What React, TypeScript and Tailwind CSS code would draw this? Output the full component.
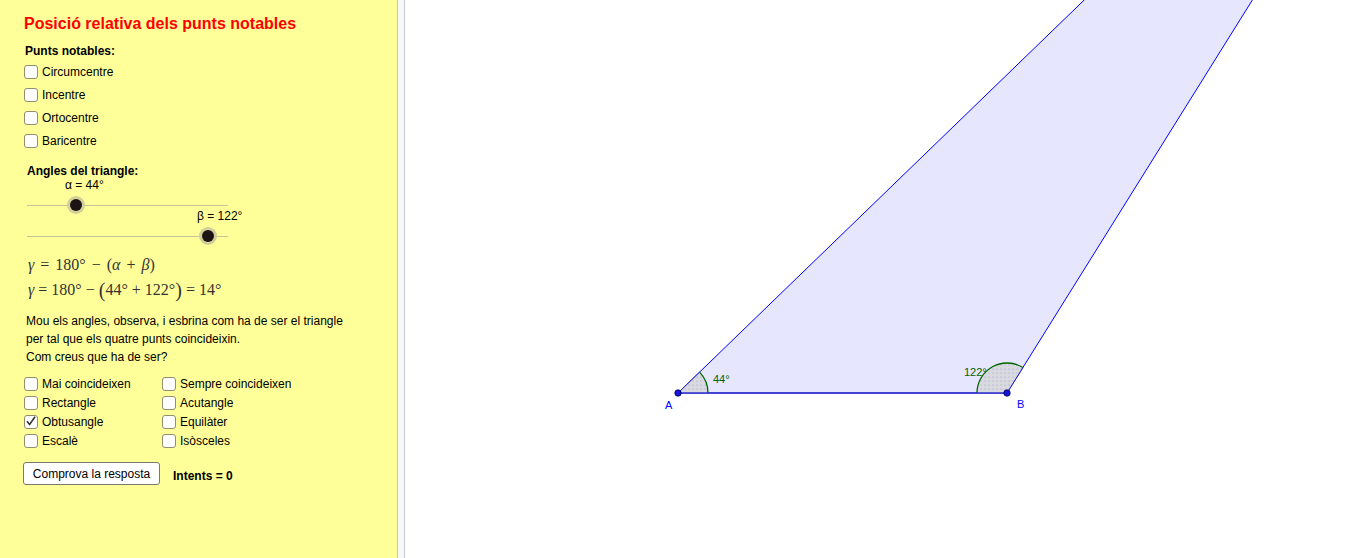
import React from 'react';

// Posició relativa dels punts notables — GeoGebra-style applet

const sans = { fontFamily: '"Liberation Sans", Arial, sans-serif' };
const serif = { fontFamily: '"Liberation Serif", "DejaVu Serif", serif' };

function Box({ checked = false }: { checked?: boolean }) {
  return (
    <span className="relative inline-block w-[14px] h-[14px] shrink-0 rounded-[3px] border-[1.5px] border-[#8f8f70] bg-white">
      {checked && (
        <svg viewBox="0 0 14 14" className="absolute -left-[1.5px] -top-[1.5px] w-[14px] h-[14px]">
          <path d="M3 7.2 L5.6 10.4 L11 2.8" fill="none" stroke="#333" strokeWidth="1.6" />
        </svg>
      )}
    </span>
  );
}

function Option({ label, checked, small }: { label: string; checked?: boolean; small?: boolean }) {
  return (
    <label className={small ? 'flex items-center gap-[4px] h-[19px] text-[12px] text-black' : 'flex items-center gap-[4px] h-[23px] text-[12px] text-black'}>
      <Box checked={checked} />
      <span>{label}</span>
    </label>
  );
}

function Slider({ knob }: { knob: number }) {
  return (
    <div className="relative ml-[3px] w-[201px] h-[12px]">
      <div className="absolute left-0 right-0 top-[6px] h-px bg-[#c4c49a]" />
      <div
        className="absolute top-[-3px] w-[18px] h-[18px] rounded-full bg-[#d0d098] flex items-center justify-center"
        style={{ left: knob - 9 }}
      >
        <div className="w-[12px] h-[12px] rounded-full bg-[#1c1414]" />
      </div>
    </div>
  );
}

function Figure() {
  const A = { x: 678, y: 393 };
  const B = { x: 1007, y: 393 };
  const r = 30;
  const rad = (d: number) => (d * Math.PI) / 180;
  const a1 = { x: A.x + r * Math.cos(rad(44)), y: A.y - r * Math.sin(rad(44)) };
  const b1 = { x: B.x + r * Math.cos(rad(58)), y: B.y - r * Math.sin(rad(58)) };
  return (
    <svg width="961" height="558" viewBox="405 0 961 558" className="block">
      <defs>
        <pattern id="dots" width="4" height="4" patternUnits="userSpaceOnUse">
          <rect width="4" height="4" fill="#d9d9e0" />
          <circle cx="1" cy="1" r="0.6" fill="#a0a0d0" />
        </pattern>
      </defs>
      <polygon
        points={`${A.x},${A.y} ${B.x},${B.y} 1509,-411`}
        fill="#e6e6ff"
        stroke="#0000ff"
        strokeWidth="1"
      />
      {/* angle sectors */}
      <path
        d={`M${A.x},${A.y} L${A.x + r},${A.y} A${r},${r} 0 0 0 ${a1.x},${a1.y} Z`}
        fill="url(#dots)"
      />
      <path d={`M${A.x + r},${A.y} A${r},${r} 0 0 0 ${a1.x},${a1.y}`} fill="none" stroke="#006400" strokeWidth="1.3" />
      <path
        d={`M${B.x},${B.y} L${b1.x},${b1.y} A${r},${r} 0 0 0 ${B.x - r},${B.y} Z`}
        fill="url(#dots)"
      />
      <path d={`M${b1.x},${b1.y} A${r},${r} 0 0 0 ${B.x - r},${B.y}`} fill="none" stroke="#006400" strokeWidth="1.3" />
      <line x1={A.x} y1={A.y} x2={B.x} y2={B.y} stroke="#3030c8" strokeWidth="1.3" />
      <line x1={A.x} y1={A.y} x2={a1.x} y2={a1.y} stroke="#2020c0" strokeWidth="1" />
      <line x1={B.x} y1={B.y} x2={b1.x} y2={b1.y} stroke="#2020c0" strokeWidth="1" />
      <text x="713" y="383" fontSize="11" fill="#006400" style={sans}>44°</text>
      <text x="964" y="376" fontSize="11" fill="#006400" style={sans}>122°</text>
      <circle cx={A.x} cy={A.y} r="3.2" fill="#1515e0" stroke="#000040" strokeWidth="0.8" />
      <circle cx={B.x} cy={B.y} r="3.2" fill="#1515e0" stroke="#000040" strokeWidth="0.8" />
      <text x="665" y="409" fontSize="11" fill="#0000ff" style={sans}>A</text>
      <text x="1017" y="408" fontSize="11" fill="#0000ff" style={sans}>B</text>
    </svg>
  );
}

export default function App() {
  return (
    <div className="flex h-screen w-full overflow-hidden bg-white" style={sans}>
      <div className="w-[397px] shrink-0 bg-[#ffff99] pl-[24px] pt-[14px] flex flex-col">
        <h1 className="text-[16px] leading-[20px] font-bold text-[#ff0000]">
          Posició relativa dels punts notables
        </h1>
        <div className="mt-[9px] ml-[1px] text-[12px] leading-[16px] font-bold text-black">Punts notables:</div>
        <div className="mt-[1px] flex flex-col">
          <Option label="Circumcentre" />
          <Option label="Incentre" />
          <Option label="Ortocentre" />
          <Option label="Baricentre" />
        </div>

        <div className="mt-[12px] ml-[3px] text-[12px] leading-[14px] font-bold text-black">Angles del triangle:</div>
        <div className="ml-[41px] text-[12px] leading-[14px] text-black">α = 44°</div>
        <div className="mt-[7px]">
          <Slider knob={49} />
        </div>
        <div className="ml-[173px] text-[12px] leading-[10px] text-black">β = 122°</div>
        <div className="mt-[9px]">
          <Slider knob={181} />
        </div>

        <div className="mt-[13px] ml-[4px] text-[16px] leading-[20px] text-[#333] [word-spacing:2px]" style={serif}>
          <i>γ</i> = 180° − (<i>α</i> + <i>β</i>)
        </div>
        <div className="mt-[5px] ml-[4px] text-[16px] leading-[20px] text-[#333] flex items-center" style={serif}>
          <i>γ</i>&nbsp;= 180° −&nbsp;<span className="text-[20px] leading-[20px]">(</span>44° + 122°<span className="text-[20px] leading-[20px]">)</span>&nbsp;= 14°
        </div>

        <p className="mt-[12px] ml-[2px] text-[12px] leading-[18px] text-black">
          Mou els angles, observa, i esbrina com ha de ser el triangle
          <br />
          per tal que els quatre punts coincideixin.
          <br />
          Com creus que ha de ser?
        </p>

        <div className="mt-[8px] grid grid-cols-[138px_1fr]">
          <Option small label="Mai coincideixen" />
          <Option small label="Sempre coincideixen" />
          <Option small label="Rectangle" />
          <Option small label="Acutangle" />
          <Option small checked label="Obtusangle" />
          <Option small label="Equilàter" />
          <Option small label="Escalè" />
          <Option small label="Isòsceles" />
        </div>

        <div className="mt-[12px] -ml-[1px] flex items-center gap-[13px]">
          <button className="w-[137px] h-[23px] rounded-[3px] border-[1.5px] border-[#7a7a6a] bg-white text-[12px] text-black">
            Comprova la resposta
          </button>
          <span className="text-[12px] font-bold text-black mt-[4px]">Intents = 0</span>
        </div>
      </div>

      <div className="w-[8px] shrink-0 bg-[#f7f8f8] border-l border-l-[#c8c8b8] border-r border-r-[#c8cad6]" />

      <div className="flex-1 min-w-0 bg-white">
        <Figure />
      </div>
    </div>
  );
}
